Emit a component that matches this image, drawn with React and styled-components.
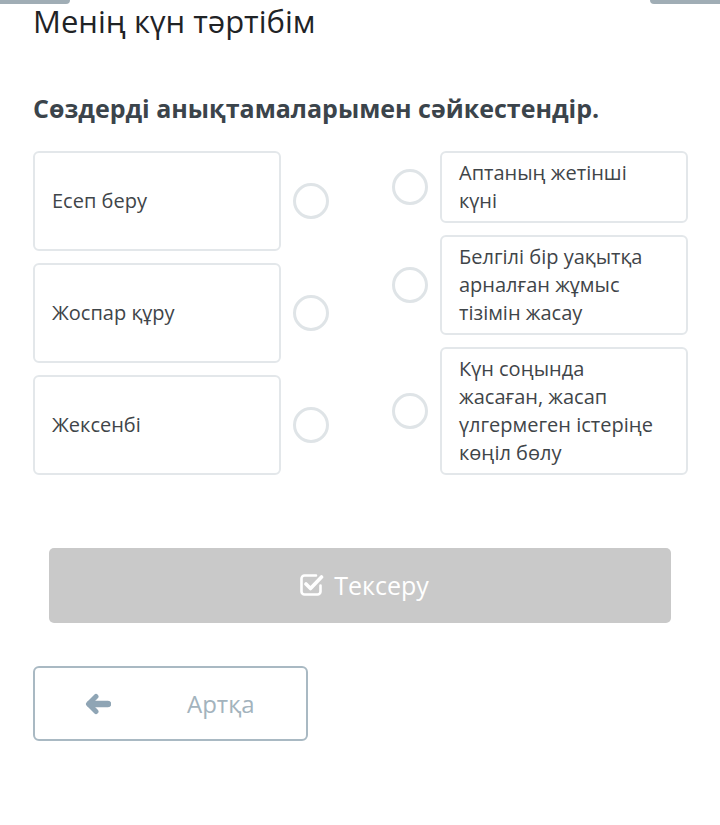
import React from 'react';
import styled, { createGlobalStyle } from 'styled-components';

const LEFT = ['Есеп беру', 'Жоспар құру', 'Жексенбі'];
const RIGHT = [
  'Аптаның жетінші күні',
  'Белгілі бір уақытқа арналған жұмыс тізімін жасау',
  'Күн соңында жасаған, жасап үлгермеген істеріңе көңіл бөлу',
];

const GlobalStyle = createGlobalStyle`
  body {
    margin: 0;
    background: #fff;
    font-family: 'Open Sans', 'Noto Sans', sans-serif;
  }
`;

const CheckSquareIcon = () => (
  <svg width="25" height="25" viewBox="0 0 25 25" fill="none">
    <path
      d="M17 3.5H5.5a3 3 0 0 0-3 3v13a3 3 0 0 0 3 3h13a3 3 0 0 0 3-3v-6"
      stroke="#fff"
      strokeWidth="2.6"
      strokeLinecap="round"
    />
    <path
      d="M7 12l4.5 4.5L22.5 5"
      stroke="#fff"
      strokeWidth="3.6"
      strokeLinecap="round"
      strokeLinejoin="round"
    />
  </svg>
);

const ArrowIcon = () => (
  <svg width="26" height="22" viewBox="0 0 26 22" fill="none">
    <path
      d="M11 3.5L3.5 11 11 18.5"
      stroke="#8fa5b5"
      strokeWidth="5"
      strokeLinecap="round"
      strokeLinejoin="round"
    />
    <path d="M5 11h18" stroke="#8fa5b5" strokeWidth="6.5" strokeLinecap="round" />
  </svg>
);

const App = () => (
  <Page>
    <GlobalStyle />
    <TopEdge>
      <EdgeTab side="left" />
      <EdgeTab side="right" />
    </TopEdge>
    <Title>Менің күн тәртібім</Title>
    <Question>Сөздерді анықтамаларымен сәйкестендір.</Question>
    <Match>
      <Column>
        {LEFT.map((text, i) => (
          <Row key={`l-${i}`} grow>
            <Card>{text}</Card>
            <Dot />
          </Row>
        ))}
      </Column>
      <Column>
        {RIGHT.map((text, i) => (
          <Row key={`r-${i}`}>
            <Dot />
            <Card>{text}</Card>
          </Row>
        ))}
      </Column>
    </Match>
    <CheckButton type="button">
      <CheckSquareIcon />
      Тексеру
    </CheckButton>
    <BackButton type="button">
      <ArrowIcon />
      <span>Артқа</span>
    </BackButton>
  </Page>
);

const Page = styled.div`
  width: 720px;
  min-height: 825px;
  box-sizing: border-box;
  padding: 0 32px 0 33px;
`;

const TopEdge = styled.div`
  display: flex;
  justify-content: space-between;
  height: 4px;
  margin: 0 -32px 0 -33px;
`;

const EdgeTab = styled.div`
  width: 70px;
  height: 4px;
  background: #a0adb5;
  border-radius: ${p => (p.side === 'left' ? '0 0 4px 0' : '0 0 0 4px')};
`;

const Title = styled.h1`
  margin: 0;
  font-size: 31px;
  font-weight: 400;
  line-height: 34px;
  color: #1f2326;
`;

const Question = styled.h2`
  margin: 55px 0 0;
  font-size: 25px;
  font-weight: 700;
  line-height: 30px;
  color: #3b444b;
`;

const Match = styled.div`
  display: flex;
  justify-content: space-between;
  margin-top: 28px;
`;

const Column = styled.div`
  display: flex;
  flex-direction: column;
  gap: 12px;
`;

const Row = styled.div`
  display: flex;
  align-items: center;
  gap: 12px;
  flex: ${p => (p.grow ? 1 : '0 0 auto')};
`;

const Card = styled.div`
  flex: 0 0 248px;
  align-self: stretch;
  display: flex;
  align-items: center;
  box-sizing: border-box;
  padding: 6px 24px 6px 17px;
  border: 2px solid #e3e7ea;
  border-radius: 6px;
  font-size: 20px;
  line-height: 28px;
  color: #3f4549;
`;

const Dot = styled.div`
  width: 36px;
  height: 36px;
  flex: none;
  box-sizing: border-box;
  border: 3px solid #dfe4e7;
  border-radius: 50%;
`;

const CheckButton = styled.button`
  display: flex;
  align-items: center;
  justify-content: center;
  gap: 10px;
  width: 622px;
  height: 75px;
  margin: 73px 0 0 16px;
  padding: 0 0 2px 8px;
  border: none;
  border-radius: 5px;
  background: #c9c9c9;
  color: #fff;
  font-family: inherit;
  font-size: 25px;
  font-weight: 400;
`;

const BackButton = styled.button`
  display: grid;
  grid-template-columns: 26px 1fr;
  align-items: center;
  width: 275px;
  height: 75px;
  margin-top: 43px;
  padding: 0 0 0 50px;
  box-sizing: border-box;
  border: 2px solid #a9b9c3;
  border-radius: 6px;
  background: #fff;
  font-family: inherit;
  font-size: 24px;

  span {
    color: #a3b3bd;
    text-align: left;
    padding-left: 76px;
  }
`;

export default App;
